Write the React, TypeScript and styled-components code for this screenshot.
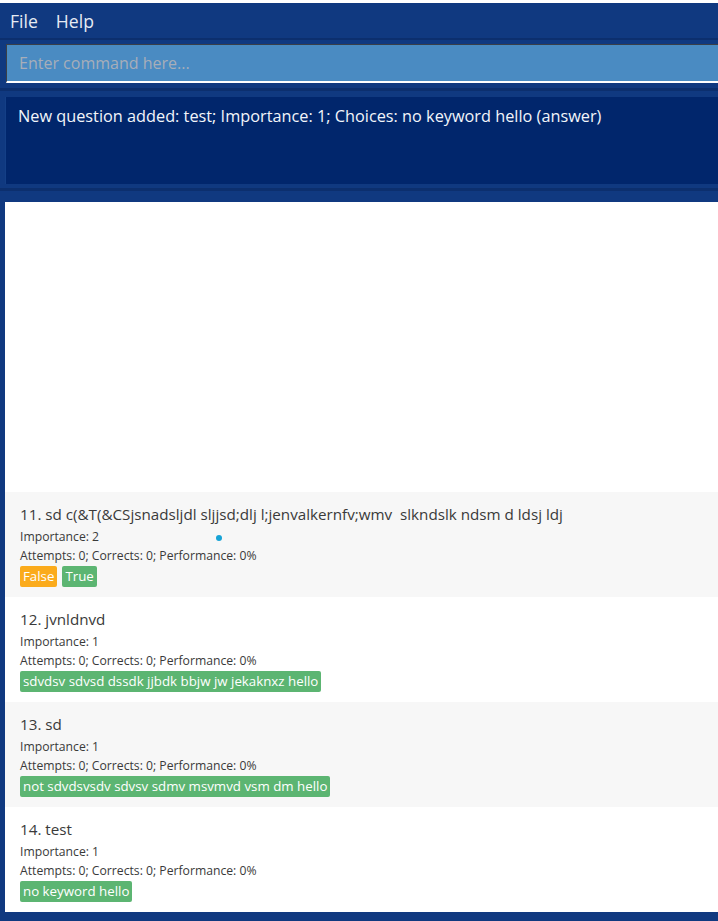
import React from 'react';
import styled, { createGlobalStyle } from 'styled-components';

const GlobalStyle = createGlobalStyle`
    html, body {
        margin: 0;
        padding: 0;
        background: #ffffff;
        overflow: hidden;
    }
    body {
        font-family: "Open Sans", "Noto Sans", sans-serif;
    }
`;

interface Question {
    index: number;
    title: string;
    importance: number;
    choices: { text: string; answer: boolean }[];
}

const questions: Question[] = [
    {
        index: 11,
        title: 'sd c(&T(&CSjsnadsljdl sljjsd;dlj l;jenvalkernfv;wmv\u00a0 slkndslk ndsm d ldsj ldj',
        importance: 2,
        choices: [{ text: 'False', answer: false }, { text: 'True', answer: true }],
    },
    {
        index: 12,
        title: 'jvnldnvd',
        importance: 1,
        choices: [{ text: 'sdvdsv sdvsd dssdk jjbdk bbjw jw jekaknxz hello', answer: true }],
    },
    {
        index: 13,
        title: 'sd',
        importance: 1,
        choices: [{ text: 'not sdvdsvsdv sdvsv sdmv msvmvd vsm dm hello', answer: true }],
    },
    {
        index: 14,
        title: 'test',
        importance: 1,
        choices: [{ text: 'no keyword hello', answer: true }],
    },
];

export default function App() {
    return (<>
        <GlobalStyle />
        <Window>
            {/* Menu */}
            <MenuBar>
                <MenuItem>File</MenuItem>
                <MenuItem>Help</MenuItem>
            </MenuBar>

            {/* Command box */}
            <CommandSection>
                <CommandInput placeholder={'Enter command here...'} />
            </CommandSection>

            {/* Result display */}
            <ResultSection>
                <ResultBox>New question added: test; Importance: 1; Choices: no keyword hello (answer)</ResultBox>
            </ResultSection>

            {/* Question list */}
            <ListSection>
                <QuestionList>
                    <ListSpacer />
                    {questions.map((q, i) => (
                        <Card key={q.index} odd={i % 2 === 0}>
                            <CardTitle>{q.index}. {q.title}</CardTitle>
                            <CardDetail spaced>Importance: {q.importance}</CardDetail>
                            <CardDetail>Attempts: 0; Corrects: 0; Performance: 0%</CardDetail>
                            <Choices>
                                {q.choices.map(c => <Choice key={c.text} answer={c.answer}>{c.text}</Choice>)}
                            </Choices>
                            {i === 0 && <CursorDot />}
                        </Card>
                    ))}
                </QuestionList>
            </ListSection>
        </Window>
    </>);
}

const Window = styled.div`
    margin-top: 3px;
    height: 918px;
    background-color: #103980;
    display: flex;
    flex-direction: column;
    overflow: hidden;
`;

const MenuBar = styled.div`
    height: 35px;
    display: flex;
    align-items: center;
    gap: 18px;
    padding-left: 10px;
    box-sizing: border-box;
`;

const MenuItem = styled.span`
    color: #e6ebf3;
    font-size: 17.6px;
    line-height: 22px;
`;

const CommandSection = styled.div`
    border-top: 2px solid #0c2f6e;
    padding: 4px 0 5px 6px;
`;

const CommandInput = styled.input`
    display: block;
    width: 100%;
    height: 39px;
    box-sizing: border-box;
    margin: 0;
    padding: 0 0 0 12px;
    background-color: #4a8bc2;
    border: none;
    border-top: 1px solid #3a3f48;
    border-left: 1px solid #3a3f48;
    border-bottom: 2px solid #ffffff;
    font-family: "Open Sans", "Noto Sans", sans-serif;
    font-size: 16px;
    color: #ffffff;
    outline: none;

    &::placeholder {
        color: #a7aeb9;
    }
`;

const ResultSection = styled.div`
    border-top: 3px solid #0c2f6e;
    padding: 6px 0 4px 5px;
`;

const ResultBox = styled.div`
    height: 87px;
    box-sizing: border-box;
    background-color: #01266c;
    border-left: 1px solid #143f86;
    padding: 8px 0 0 12px;
    color: #f2f5fa;
    font-size: 16.3px;
    line-height: 22px;
    white-space: nowrap;
`;

const ListSection = styled.div`
    flex: 1;
    border-top: 3px solid #0c2f6e;
    padding: 11px 0 9px 5px;
    display: flex;
    min-height: 0;
`;

const QuestionList = styled.div`
    flex: 1;
    background-color: #ffffff;
    display: flex;
    flex-direction: column;
    overflow: hidden;
`;

const ListSpacer = styled.div`
    flex: 1;
`;

const Card = styled.div<{ odd: boolean }>`
    position: relative;
    height: 105px;
    box-sizing: border-box;
    padding: 11px 0 0 15px;
    background-color: ${props => props.odd ? '#f7f7f7' : '#ffffff'};
    color: #3a3a3a;
`;

const CardTitle = styled.div`
    font-size: 15.2px;
    line-height: 22px;
    white-space: nowrap;
`;

const CardDetail = styled.div<{ spaced?: boolean }>`
    font-size: 12.2px;
    line-height: 19px;
    margin-top: ${props => props.spaced ? '2px' : '0'};
`;

const Choices = styled.div`
    display: flex;
    gap: 5px;
    margin-top: 1px;
`;

const Choice = styled.span<{ answer: boolean }>`
    height: 21px;
    line-height: 21px;
    padding: 0 3px;
    border-radius: 2px;
    font-size: 13.3px;
    color: #ffffff;
    background-color: ${props => props.answer ? '#5cb572' : '#fbab1c'};
`;

const CursorDot = styled.span`
    position: absolute;
    left: 211px;
    top: 43px;
    width: 6px;
    height: 6px;
    border-radius: 50%;
    background-color: #16a3d6;
`;
